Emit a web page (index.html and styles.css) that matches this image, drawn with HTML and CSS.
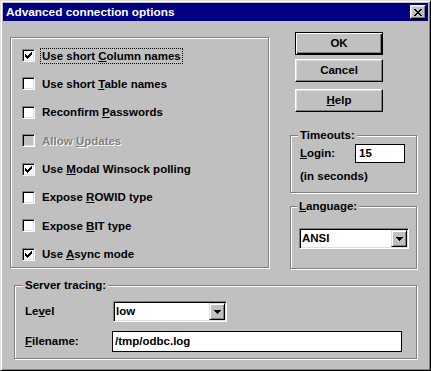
FILE: index.html
```html
<!DOCTYPE html>
<html>
<head>
<meta charset="utf-8">
<title>Advanced connection options</title>
<link rel="stylesheet" href="styles.css">
</head>
<body>
<div class="window">
  <div class="titlebar">
    <span class="title">Advanced connection options</span>
    <span class="close"><svg width="8" height="7" viewBox="0 0 8 7" shape-rendering="crispEdges"><path d="M0 0h2v1H0zM6 0h2v1H6zM1 1h2v1H1zM5 1h2v1H5zM2 2h4v1H2zM3 3h2v1H3zM2 4h4v1H2zM1 5h2v1H1zM5 5h2v1H5zM0 6h2v1H0zM6 6h2v1H6z" fill="#000"/></svg></span>
  </div>
  <div class="content">
    <div class="group options">
      <div class="check"><span class="box checked"><svg width="7" height="7" viewBox="0 0 7 7" shape-rendering="crispEdges"><path d="M6 0h1v1H6zM5 1h2v1H5zM0 2h1v1H0zM4 2h3v1H4zM0 3h2v1H0zM3 3h3v1H3zM0 4h5v1H0zM1 5h3v1H1zM2 6h1v1H2z" fill="#000"/></svg></span><span class="label focus">Use short <u>C</u>olumn names</span></div>
      <div class="check"><span class="box"></span><span class="label">Use short <u>T</u>able names</span></div>
      <div class="check"><span class="box"></span><span class="label">Reconfirm <u>P</u>asswords</span></div>
      <div class="check disabled"><span class="box"></span><span class="label">Allow <u>U</u>pdates</span></div>
      <div class="check"><span class="box checked"><svg width="7" height="7" viewBox="0 0 7 7" shape-rendering="crispEdges"><path d="M6 0h1v1H6zM5 1h2v1H5zM0 2h1v1H0zM4 2h3v1H4zM0 3h2v1H0zM3 3h3v1H3zM0 4h5v1H0zM1 5h3v1H1zM2 6h1v1H2z" fill="#000"/></svg></span><span class="label">Use <u>M</u>odal Winsock polling</span></div>
      <div class="check"><span class="box"></span><span class="label">Expose <u>R</u>OWID type</span></div>
      <div class="check"><span class="box"></span><span class="label">Expose <u>B</u>IT type</span></div>
      <div class="check"><span class="box checked"><svg width="7" height="7" viewBox="0 0 7 7" shape-rendering="crispEdges"><path d="M6 0h1v1H6zM5 1h2v1H5zM0 2h1v1H0zM4 2h3v1H4zM0 3h2v1H0zM3 3h3v1H3zM0 4h5v1H0zM1 5h3v1H1zM2 6h1v1H2z" fill="#000"/></svg></span><span class="label">Use <u>A</u>sync mode</span></div>
    </div>
    <div class="side">
      <div class="btn default">OK</div>
      <div class="btn cancel">Cancel</div>
      <div class="btn help"><u>H</u>elp</div>
      <fieldset class="group timeouts">
        <legend>Timeouts:</legend>
        <div class="field-row"><span class="login-lbl"><u>L</u>ogin:</span><span class="textbox login">15</span></div>
        <div class="note">(in seconds)</div>
      </fieldset>
      <fieldset class="group language">
        <legend><u>L</u>anguage:</legend>
        <div class="combo lang"><span class="combo-val">ANSI</span><span class="combo-btn"><svg width="7" height="4" viewBox="0 0 7 4" shape-rendering="crispEdges"><path d="M0 0h7v1H0zM1 1h5v1H1zM2 2h3v1H2zM3 3h1v1H3z" fill="#000"/></svg></span></div>
      </fieldset>
    </div>
    <fieldset class="group tracing">
      <legend>Server tracing:</legend>
      <div class="trace-grid">
        <span class="trace-lbl">Le<u>v</u>el</span>
        <div class="combo level"><span class="combo-val">low</span><span class="combo-btn"><svg width="7" height="4" viewBox="0 0 7 4" shape-rendering="crispEdges"><path d="M0 0h7v1H0zM1 1h5v1H1zM2 2h3v1H2zM3 3h1v1H3z" fill="#000"/></svg></span></div>
        <span class="trace-lbl"><u>F</u>ilename:</span>
        <span class="textbox filename">/tmp/odbc.log</span>
      </div>
    </fieldset>
  </div>
</div>
</body>
</html>
```
FILE: styles.css
```css
* { box-sizing: border-box; }

body {
  margin: 0;
  background: #c0c0c0;
  color: #000;
  font-family: "Liberation Sans", Arial, sans-serif;
  font-weight: bold;
  font-size: 11.5px;
  line-height: 13px;
}

u { text-underline-offset: 1px; }

.window {
  width: 431px;
  height: 371px;
  background: #c0c0c0;
  border: 1px solid;
  border-color: #dfdfdf #000 #000 #dfdfdf;
  box-shadow: inset 1px 1px #fff, inset -1px -1px #808080;
  padding: 2px;
}

.titlebar {
  height: 18px;
  background: #000080;
  color: #fff;
  display: flex;
  align-items: center;
  padding: 0 2px 0 3px;
}

.title {
  flex: 1;
  font-size: 11.8px;
}

.close {
  width: 16px;
  height: 14px;
  display: flex;
  align-items: center;
  justify-content: center;
  background: #c0c0c0;
  border: 1px solid;
  border-color: #fff #000 #000 #fff;
  box-shadow: inset -1px -1px #808080, inset 1px 1px #dfdfdf;
}

.content {
  display: grid;
  grid-template-columns: 259px 127px;
  column-gap: 21px;
  padding-left: 7px;
  align-items: start;
}

.group {
  border: 1px solid #808080;
  box-shadow: inset 1px 1px #fff, 1px 1px #fff;
  margin: 0;
  min-width: 0;
}

fieldset.group { padding: 0; }

legend {
  padding: 0 2px;
  margin-left: -2px;
  line-height: 13px;
  background: #c0c0c0;
}

.options {
  margin-top: 16px;
  height: 231px;
  padding: 11px 0 0 11px;
  display: flex;
  flex-direction: column;
  gap: 15.4px;
}

.check {
  display: flex;
  align-items: center;
  height: 13px;
}

.box {
  flex: none;
  width: 13px;
  height: 13px;
  background: #fff;
  border: 1px solid;
  border-color: #808080 #fff #fff #808080;
  box-shadow: inset 1px 1px #000, inset -1px -1px #dfdfdf;
  display: flex;
  align-items: center;
  justify-content: center;
  margin-right: 5px;
}

.label {
  padding: 1px 1px 0 1px;
  border: 1px dotted transparent;
  white-space: nowrap;
}

.label.focus { border-color: #000; }

.disabled .box { background: #c0c0c0; }

.disabled .label {
  color: #808080;
  text-shadow: 1px 1px #fff;
}

.side {
  padding-top: 11px;
  display: flex;
  flex-direction: column;
}

.btn {
  width: 88px;
  height: 23px;
  margin-left: 5px;
  display: flex;
  align-items: center;
  justify-content: center;
  background: #c0c0c0;
  border: 1px solid;
  border-color: #fff #000 #000 #fff;
  box-shadow: inset -1px -1px #808080, inset 1px 1px #dfdfdf;
}

.btn.default {
  border-color: #000;
  box-shadow: inset 1px 1px #fff, inset -1px -1px #000, inset -2px -2px #808080;
  margin-bottom: 4px;
}

.btn.cancel { margin-bottom: 7px; }

.timeouts {
  margin-top: 17px;
  height: 64px;
}

fieldset.timeouts { padding: 2px 0 0 9px; }

.field-row {
  display: flex;
  align-items: center;
}

.login-lbl { width: 55px; }

.textbox {
  background: #fff;
  border: 1px solid #000;
  display: flex;
  align-items: center;
}

.login {
  width: 50px;
  height: 19px;
  padding-left: 3px;
}

.note { margin-top: 7px; }

.language {
  margin-top: 7px;
  height: 69px;
}

fieldset.language { padding: 15px 0 0 8px; }

.combo {
  height: 21px;
  display: flex;
  align-items: center;
  background: #fff;
  border: 1px solid;
  border-color: #808080 #fff #fff #808080;
  box-shadow: inset 1px 1px #000, inset -1px -1px #dfdfdf;
  padding: 1px 1px 1px 2px;
}

.combo-val { flex: 1; }

.combo-btn {
  flex: none;
  width: 16px;
  height: 17px;
  display: flex;
  align-items: center;
  justify-content: center;
  background: #c0c0c0;
  border: 1px solid;
  border-color: #dfdfdf #000 #000 #dfdfdf;
  box-shadow: inset 1px 1px #fff, inset -1px -1px #808080;
}

.lang { width: 110px; }

.tracing {
  grid-column: 1 / -1;
  margin: 10px 0 0 4px;
  width: 403px;
  height: 80px;
}

fieldset.tracing { margin: 10px 0 0 4px; padding: 9px 0 0 10px; }

.trace-grid {
  display: grid;
  grid-template-columns: 87px 290px;
  row-gap: 9px;
  align-items: center;
}

.level {
  width: 114px;
  margin-left: 1px;
}

.filename {
  width: 290px;
  height: 21px;
  padding-left: 2px;
}
```
